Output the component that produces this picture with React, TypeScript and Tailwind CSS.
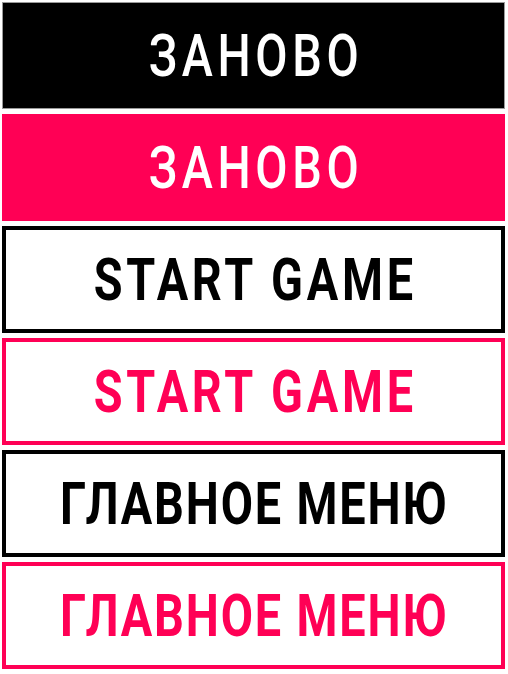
const font = { fontFamily: 'Roboto, "DejaVu Sans", sans-serif' };

function Label({ text, className }: { text: string; className: string }) {
  return <span className={`inline-block whitespace-nowrap scale-x-[0.78] ${className}`}>{text}</span>;
}

export default function App() {
  return (
    <div className="min-h-screen bg-white pt-[2px] pl-[2px] pr-[3px] flex flex-col gap-[5px]" style={font}>
      {/* Залитые кнопки */}
      <button className="h-[107px] w-full bg-black text-white text-[60px] leading-none flex items-center justify-center border border-[#9a9a9a] overflow-hidden">
        <Label text="ЗАНОВО" className="font-medium tracking-[0.1em] pl-[0.1em]" />
      </button>
      <button className="h-[107px] w-full bg-[#ff0055] text-white text-[60px] leading-none flex items-center justify-center overflow-hidden">
        <Label text="ЗАНОВО" className="font-medium tracking-[0.1em] pl-[0.1em]" />
      </button>

      {/* Кнопки с обводкой */}
      <button className="h-[107px] w-full bg-white text-black text-[60px] leading-none flex items-center justify-center border-4 border-black overflow-hidden">
        <Label text="START GAME" className="font-bold tracking-[0.08em] pl-[0.08em]" />
      </button>
      <button className="h-[107px] w-full bg-white text-[#ff0055] text-[60px] leading-none flex items-center justify-center border-4 border-[#ff0055] overflow-hidden">
        <Label text="START GAME" className="font-bold tracking-[0.08em] pl-[0.08em]" />
      </button>
      <button className="h-[107px] w-full bg-white text-black text-[60px] leading-none flex items-center justify-center border-4 border-black overflow-hidden">
        <Label text="ГЛАВНОЕ МЕНЮ" className="font-bold tracking-[0.04em] pl-[0.04em]" />
      </button>
      <button className="h-[107px] w-full bg-white text-[#ff0055] text-[60px] leading-none flex items-center justify-center border-4 border-[#ff0055] overflow-hidden">
        <Label text="ГЛАВНОЕ МЕНЮ" className="font-bold tracking-[0.04em] pl-[0.04em]" />
      </button>
    </div>
  );
}
